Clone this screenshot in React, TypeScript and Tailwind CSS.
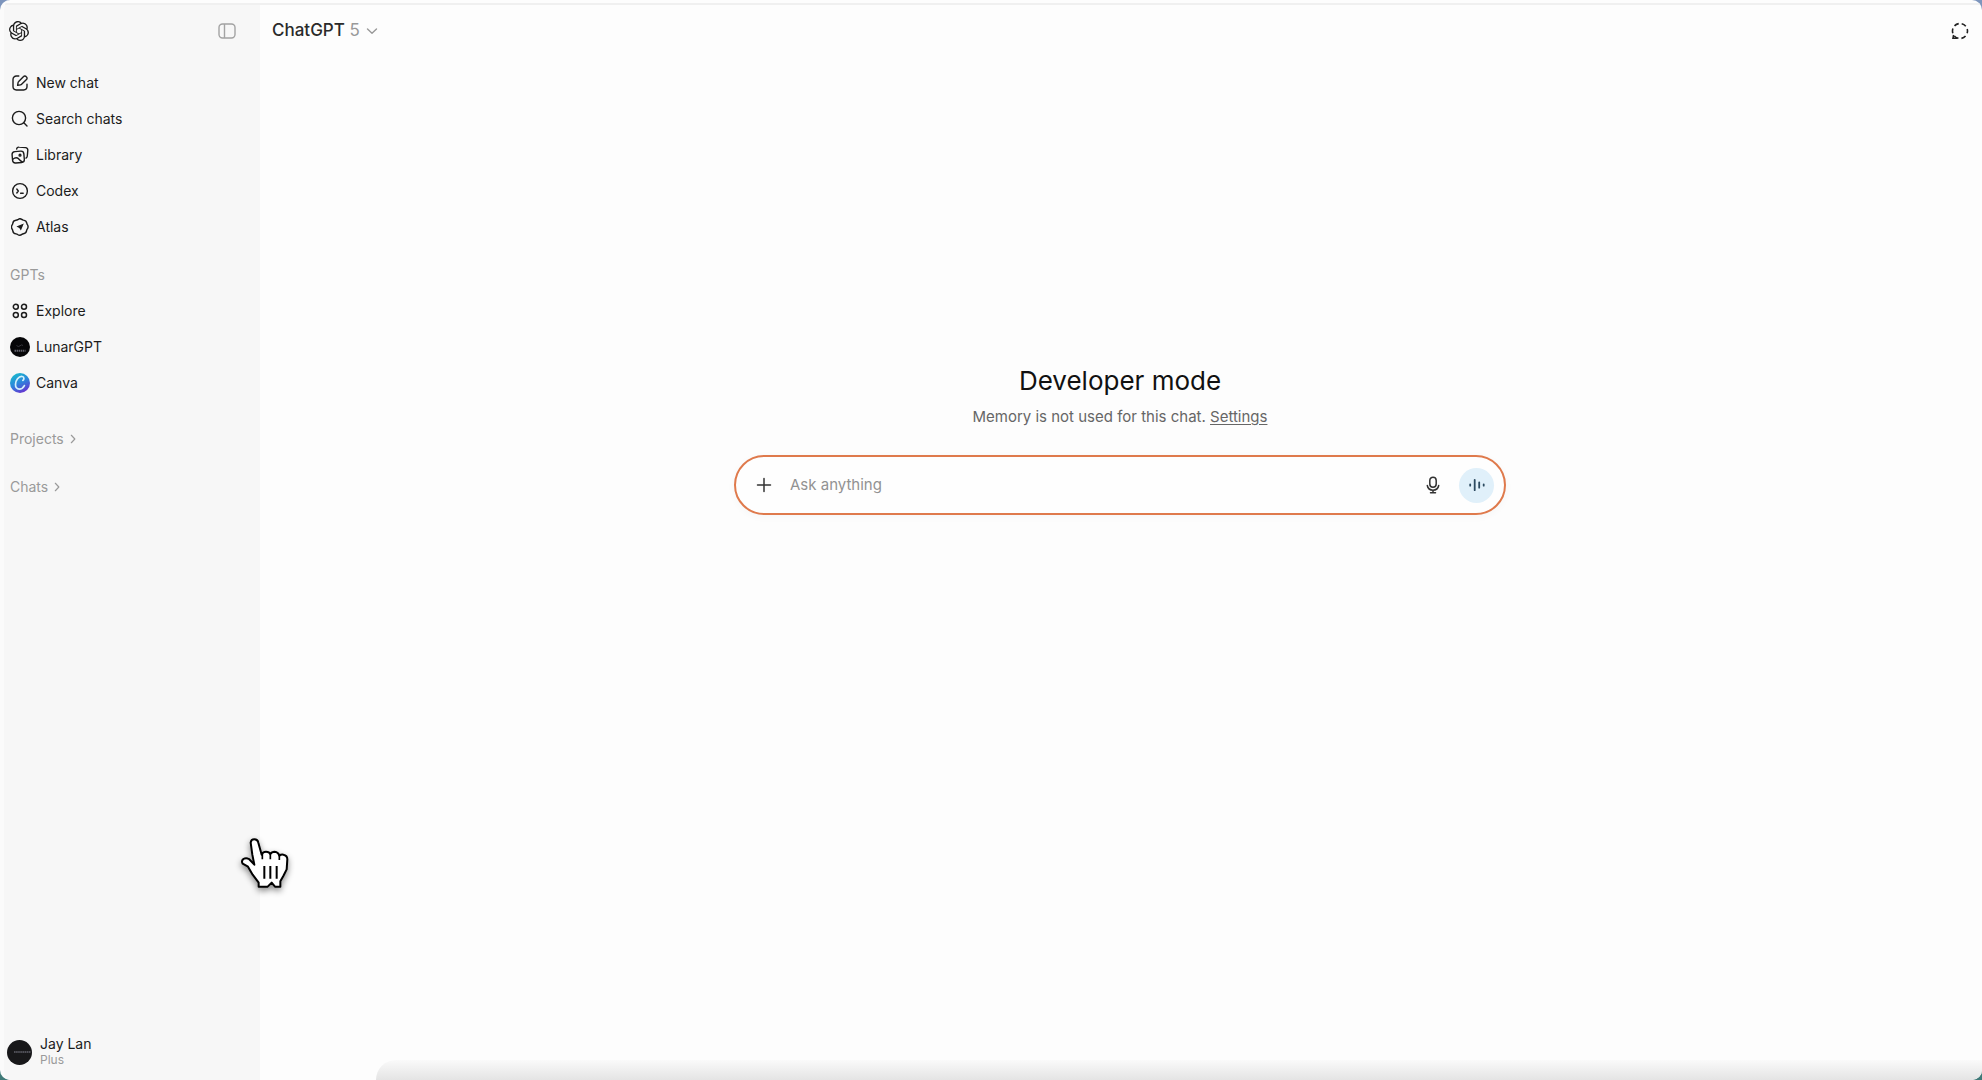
import React from "react";
import { SiOpenai } from "react-icons/si";

function NewChatIcon() {
  return (
    <svg width="18" height="18" viewBox="0 0 18 18" fill="none" stroke="currentColor" strokeWidth="1.4" strokeLinecap="round" strokeLinejoin="round">
      <path d="M7.8 2H5.4A3.4 3.4 0 0 0 2 5.4v7.2A3.4 3.4 0 0 0 5.4 16h7.2a3.4 3.4 0 0 0 3.4-3.4v-2.4" />
      <path d="M6.6 11.4l.5-2.9a2 2 0 0 1 .6-1.1l4.9-4.9a1.7 1.7 0 0 1 2.5 0l.4.4a1.7 1.7 0 0 1 0 2.5l-4.9 4.9a2 2 0 0 1-1.1.6z" />
    </svg>
  );
}

function SearchIcon() {
  return (
    <svg width="18" height="18" viewBox="0 0 18 18" fill="none" stroke="currentColor" strokeWidth="1.4" strokeLinecap="round">
      <circle cx="8" cy="8" r="6.6" />
      <path d="M12.8 12.8L16 16" />
    </svg>
  );
}

function LibraryIcon() {
  return (
    <svg width="18" height="18" viewBox="0 0 18 18" fill="none" stroke="currentColor" strokeWidth="1.4" strokeLinecap="round" strokeLinejoin="round">
      <path d="M5.6 3A2.4 2.4 0 0 1 8.2 1.1l6.4.5a2.4 2.4 0 0 1 2.2 2.6l-.5 5.8a2.6 2.6 0 0 1-1.3 2.1" />
      <rect x="1.3" y="5.4" width="11.8" height="11.4" rx="3" transform="rotate(-5 7 11)" />
      <path d="M1.8 13.2c2.6-2.2 4.400-1.800 5.800-.4 1.300 1.400 2.200 2.400 3.800 3.200" />
      <circle cx="9" cy="9.200" r=".9" />
    </svg>
  );
}

function CodexIcon() {
  return (
    <svg width="18" height="18" viewBox="0 0 18 18" fill="none" stroke="currentColor" strokeWidth="1.4" strokeLinecap="round" strokeLinejoin="round">
      <circle cx="9" cy="9" r="7.4" />
      <path d="M5.8 7l1.500 2-1.500 2M9.600 11.200h2.600" />
    </svg>
  );
}

function AtlasIcon() {
  return (
    <svg width="18" height="18" viewBox="0 0 18 18" fill="none" stroke="currentColor" strokeWidth="1.4" strokeLinejoin="round">
      <path d="M6.800 1.700C7.800.700 9.500.500 10.700 1.400c.5.400 1 .6 1.700.7 1.700.2 3.100 1.300 3.400 3 .1.700.3 1.100.6 1.600.9 1.400.8 3.100-.2 4.400-.4.500-.5.900-.6 1.500-.2 1.700-1.500 2.900-3.200 3.100-.6.100-1 .3-1.500.7-1.300 1-3 1-4.300.1-.5-.4-1-.5-1.600-.6-1.700-.2-3-1.500-3.200-3.100-.1-.6-.2-1-.6-1.500C.3 9.900.3 8.200 1.200 6.900c.4-.5.5-1 .6-1.600.2-1.700 1.500-2.800 3.100-3 .700-.1 1.300-.2 1.900-.6z" />
      <path d="M12.800 5.600L9.900 12.600 8.300 9.900 5.400 8.400z" fill="currentColor" stroke="none" />
    </svg>
  );
}

function ExploreIcon() {
  return (
    <svg width="18" height="18" viewBox="0 0 18 18" fill="none" stroke="currentColor" strokeWidth="1.5">
      <circle cx="4.800" cy="4.800" r="2.500" />
      <circle cx="13" cy="4.800" r="2.500" />
      <circle cx="4.800" cy="13" r="2.500" />
      <circle cx="13" cy="13" r="2.500" />
    </svg>
  );
}

function LunarLogo() {
  return (
    <svg width="20" height="20" viewBox="0 0 20 20" className="-mx-px">
      <circle cx="10" cy="10" r="10" fill="#060608" />
      <path d="M6.500 8.500q1.800 2 3.500.3t3-.3" fill="none" stroke="#3f3f46" strokeWidth=".8" />
      <path d="M4.500 13.800h11" stroke="#63636e" strokeWidth="2" strokeDasharray="1.500 .6" />
    </svg>
  );
}

function CanvaLogo() {
  return (
    <svg width="20" height="20" viewBox="0 0 20 20" className="-mx-px">
      <defs>
        <linearGradient id="canva" x1=".2" y1="0" x2=".7" y2="1">
          <stop offset="0" stopColor="#18bccb" />
          <stop offset=".5" stopColor="#2b86dc" />
          <stop offset="1" stopColor="#6a2fd0" />
        </linearGradient>
      </defs>
      <circle cx="10" cy="10" r="10" fill="url(#canva)" />
      <path d="M12.800 7.400c1.500-.8 1.600-3.600-.6-3.900C8.600 3.100 5.600 7.300 5.500 11.400c-.1 2.800 1.400 4.800 3.700 4.800 2.200 0 4.100-1.500 5.200-3.600" fill="none" stroke="#d5f1fb" strokeWidth="1.700" strokeLinecap="round" />
    </svg>
  );
}

function Chevron({ className }: { className: string }) {
  return (
    <svg viewBox="0 0 12 12" className={className} fill="none" stroke="currentColor" strokeWidth="1.400" strokeLinecap="round" strokeLinejoin="round">
      <path d="M4 1.500L8.200 6 4 10.500" />
    </svg>
  );
}

function HandCursor() {
  return (
    <svg
      viewBox="60 54 150 156"
      className="pointer-events-none absolute left-[240px] top-[838px] h-[52px] w-[50px] overflow-visible drop-shadow-[0_3px_3px_rgba(0,0,0,0.45)]"
    >
      <path
        d="M92 68Q93 58 103 58Q113 58 115 68L125 104Q128 95 138 95Q148 95 151 102Q155 95 164 95Q175 96 178 107Q183 103 190 104Q202 106 202 118L200 148L190 168L181 184V200H165L155 188L143 200H116V188L98 164L84 140L68 131Q63 123 70 117Q78 112 87 117L103 134L97 104Z"
        fill="#fff"
        stroke="#000"
        strokeWidth="6"
        strokeLinejoin="round"
      />
      <path d="M127 98V118M151 100V118M178 104V120" stroke="#000" strokeWidth="5" />
      <path d="M133 138V176M151 138V176M170 138V176" stroke="#000" strokeWidth="6" />
    </svg>
  );
}

const navItems = [
  { label: "New chat", icon: <NewChatIcon /> },
  { label: "Search chats", icon: <SearchIcon /> },
  { label: "Library", icon: <LibraryIcon /> },
  { label: "Codex", icon: <CodexIcon /> },
  { label: "Atlas", icon: <AtlasIcon /> },
];

const gptItems = [
  { label: "Explore", icon: <ExploreIcon /> },
  { label: "LunarGPT", icon: <LunarLogo /> },
  { label: "Canva", icon: <CanvaLogo /> },
];

function NavList({ items }: { items: { label: string; icon: React.ReactNode }[] }) {
  return (
    <ul>
      {items.map((item) => (
        <li key={item.label}>
          <a href="#" className="flex h-9 items-center gap-[7px] pl-[7px]">
            {item.icon}
            {item.label}
          </a>
        </li>
      ))}
    </ul>
  );
}

function Sidebar() {
  return (
    <aside className="flex w-64 shrink-0 flex-col bg-[#f7f7f7] text-sm text-[#1c1c1c]">
      <div className="flex h-[54px] items-center justify-between pl-[5px] pr-6">
        <a href="#" aria-label="Home">
          <SiOpenai className="size-5" />
        </a>
        <button aria-label="Close sidebar" className="text-[#a3a3a3]">
          <svg width="18" height="18" viewBox="0 0 18 18" fill="none" stroke="currentColor" strokeWidth="1.4">
            <rect x="1" y="2" width="16" height="14" rx="3.5" />
            <path d="M6.5 2v14" />
          </svg>
        </button>
      </div>
      <nav className="mt-[7px]">
        <NavList items={navItems} />
        <h2 className="mt-3 flex h-9 items-center pl-1.5 text-[#9a9a9a]">GPTs</h2>
        <NavList items={gptItems} />
        <button className="mt-5 flex h-9 w-full items-center gap-1 pl-1.5 text-[#9a9a9a]">
          Projects <Chevron className="size-2.5" />
        </button>
        <button className="mt-3 flex h-9 w-full items-center gap-1 pl-1.5 text-[#9a9a9a]">
          Chats <Chevron className="size-2.5" />
        </button>
      </nav>
      <button className="mb-3 mt-auto flex items-center gap-2 pl-[3px] text-left">
        <svg width="25" height="25" viewBox="0 0 25 25">
          <circle cx="12.5" cy="12.5" r="12.5" fill="#18181a" />
          <path d="M7 12h17" stroke="#62626c" strokeWidth="1.600" strokeDasharray="1.600 .5" />
        </svg>
        <span>
          <span className="block leading-4">Jay Lan</span>
          <span className="block text-xs leading-4 text-[#9a9a9a]">Plus</span>
        </span>
      </button>
    </aside>
  );
}

function Composer() {
  return (
    <form className="mt-7 flex h-[60px] w-full max-w-[772px] items-center rounded-full border-2 border-[#df7a4c] bg-[#fefefe] pl-[18px] pr-2.5 shadow-[0_2px_8px_rgba(0,0,0,0.03)]">
      <button type="button" aria-label="Add files" className="text-[#333]">
        <svg width="20" height="20" viewBox="0 0 20 20" fill="none" stroke="currentColor" strokeWidth="1.5" strokeLinecap="round">
          <path d="M10 3.500v13M3.500 10h13" />
        </svg>
      </button>
      <input
        aria-label="Message"
        placeholder="Ask anything"
        className="ml-4 min-w-0 flex-1 bg-transparent text-[15px] outline-none placeholder:text-[#929292]"
      />
      <button type="button" aria-label="Dictate" className="text-[#333]">
        <svg width="18" height="18" viewBox="0 0 18 18" fill="none" stroke="currentColor" strokeWidth="1.5" strokeLinecap="round">
          <rect x="5.800" y="1.200" width="6.400" height="10" rx="3.200" />
          <path d="M3.300 9.500a5.800 5.800 0 0 0 11.400 0M9 14.200v2.300M6.500 16.700h5" />
        </svg>
      </button>
      <button type="button" aria-label="Voice mode" className="ml-[17px] flex size-[35px] items-center justify-center rounded-full bg-[#e0f0fa] text-[#2c4a60]">
        <svg width="18" height="18" viewBox="0 0 18 18" fill="none" stroke="currentColor" strokeWidth="1.8" strokeLinecap="round">
          <path d="M2.200 8.300v1.400M6.700 3.800v10.400M11.200 6.300v5.400M15.700 8.300v1.400" />
        </svg>
      </button>
    </form>
  );
}

function App() {
  return (
    <div className="relative h-screen overflow-hidden bg-gradient-to-b from-[#7d95bd] to-[#3f7a78] font-['Inter',sans-serif]">
      <div className="relative flex h-full overflow-hidden rounded-[10px] border-l-4 border-[#fbfbfb] bg-[#fdfdfd] pt-1">
        <Sidebar />
        <div className="flex min-w-0 flex-1 flex-col">
          <header className="flex h-[54px] items-center justify-between pl-3 pr-3">
            <button className="flex items-center gap-1.5 text-[17px] font-medium text-[#2a2a2a]">
              <span>
                ChatGPT <span className="font-normal text-[#999]">5</span>
              </span>
              <Chevron className="size-3 rotate-90 text-[#999]" />
            </button>
            <button aria-label="Temporary chat" className="text-[#222]">
              <svg width="20" height="20" viewBox="0 0 20 20" fill="none" stroke="currentColor" strokeWidth="1.6">
                <circle cx="10" cy="10" r="7.500" strokeDasharray="4.800 3.050" strokeDashoffset="2.400" />
                <path d="M3.600 14L3 17.200h4.500" />
              </svg>
            </button>
          </header>
          <main className="flex flex-1 flex-col items-center pr-0.5 pt-[305px]">
            <h1 className="text-[26px] leading-9 text-[#111]">Developer mode</h1>
            <p className="mt-2 text-[15px] leading-5 text-[#666]">
              Memory is not used for this chat.{" "}
              <a href="#" className="underline underline-offset-2">
                Settings
              </a>
            </p>
            <Composer />
          </main>
        </div>
        <div className="pointer-events-none absolute inset-x-0 top-[3px] h-0.5 bg-[#f0f0f0]" />
        <div className="pointer-events-none absolute bottom-0 left-[372px] right-0 h-5 rounded-tl-[20px] bg-gradient-to-b from-[#fafafa] to-[#e4e4e4]" />
      </div>
      <HandCursor />
    </div>
  );
}

export default App;
